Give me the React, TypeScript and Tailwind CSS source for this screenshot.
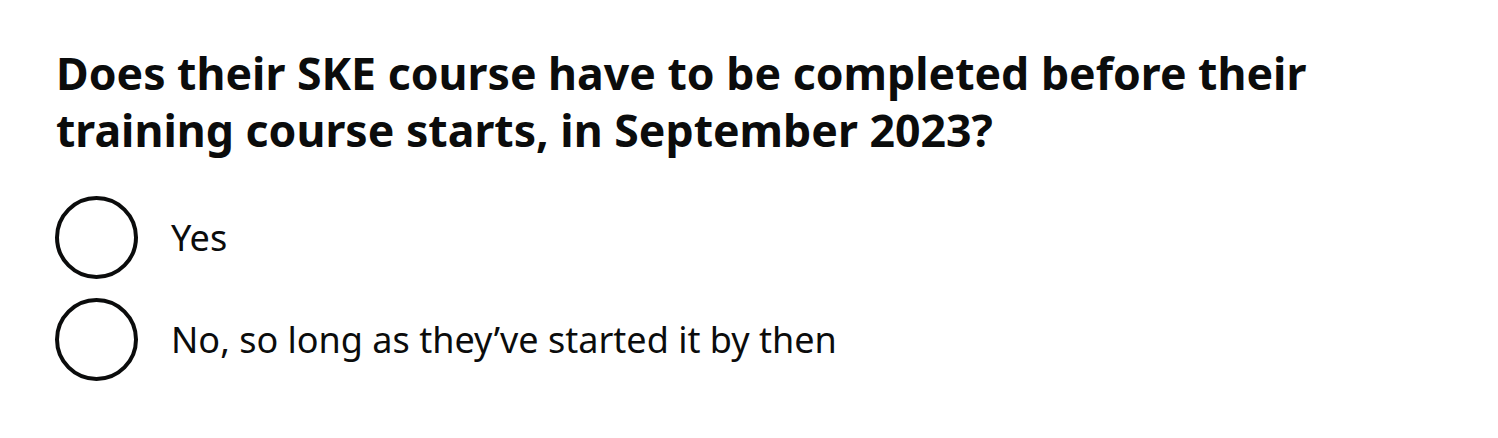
import React from "react";

type RadioOption = {
  id: string;
  label: string;
};

const options: RadioOption[] = [
  { id: "yes", label: "Yes" },
  { id: "no", label: "No, so long as they’ve started it by then" },
];

function RadioItem({ option }: { option: RadioOption }) {
  return (
    <label htmlFor={option.id} className="flex items-center gap-[33px] cursor-pointer">
      <input
        id={option.id}
        type="radio"
        name="ske-completed"
        className="appearance-none w-[83px] h-[83px] rounded-full border-4 border-[#0b0c0c] bg-white shrink-0 m-0"
      />
      <span className="text-[36px] leading-[50px] text-[#0b0c0c]">{option.label}</span>
    </label>
  );
}

export default function App() {
  return (
    <div className="min-h-screen bg-white px-[55px] pt-[44px] font-['Noto_Sans',sans-serif]">
      <fieldset className="max-w-[1320px]">
        <legend className="pl-[1px] text-[44.6px] leading-[57px] font-bold text-[#0b0c0c] mb-[38px]">
          Does their SKE course have to be completed before their training course starts, in
          September 2023?
        </legend>
        <div className="flex flex-col gap-[19px]">
          {options.map((option) => (
            <RadioItem key={option.id} option={option} />
          ))}
        </div>
      </fieldset>
    </div>
  );
}
